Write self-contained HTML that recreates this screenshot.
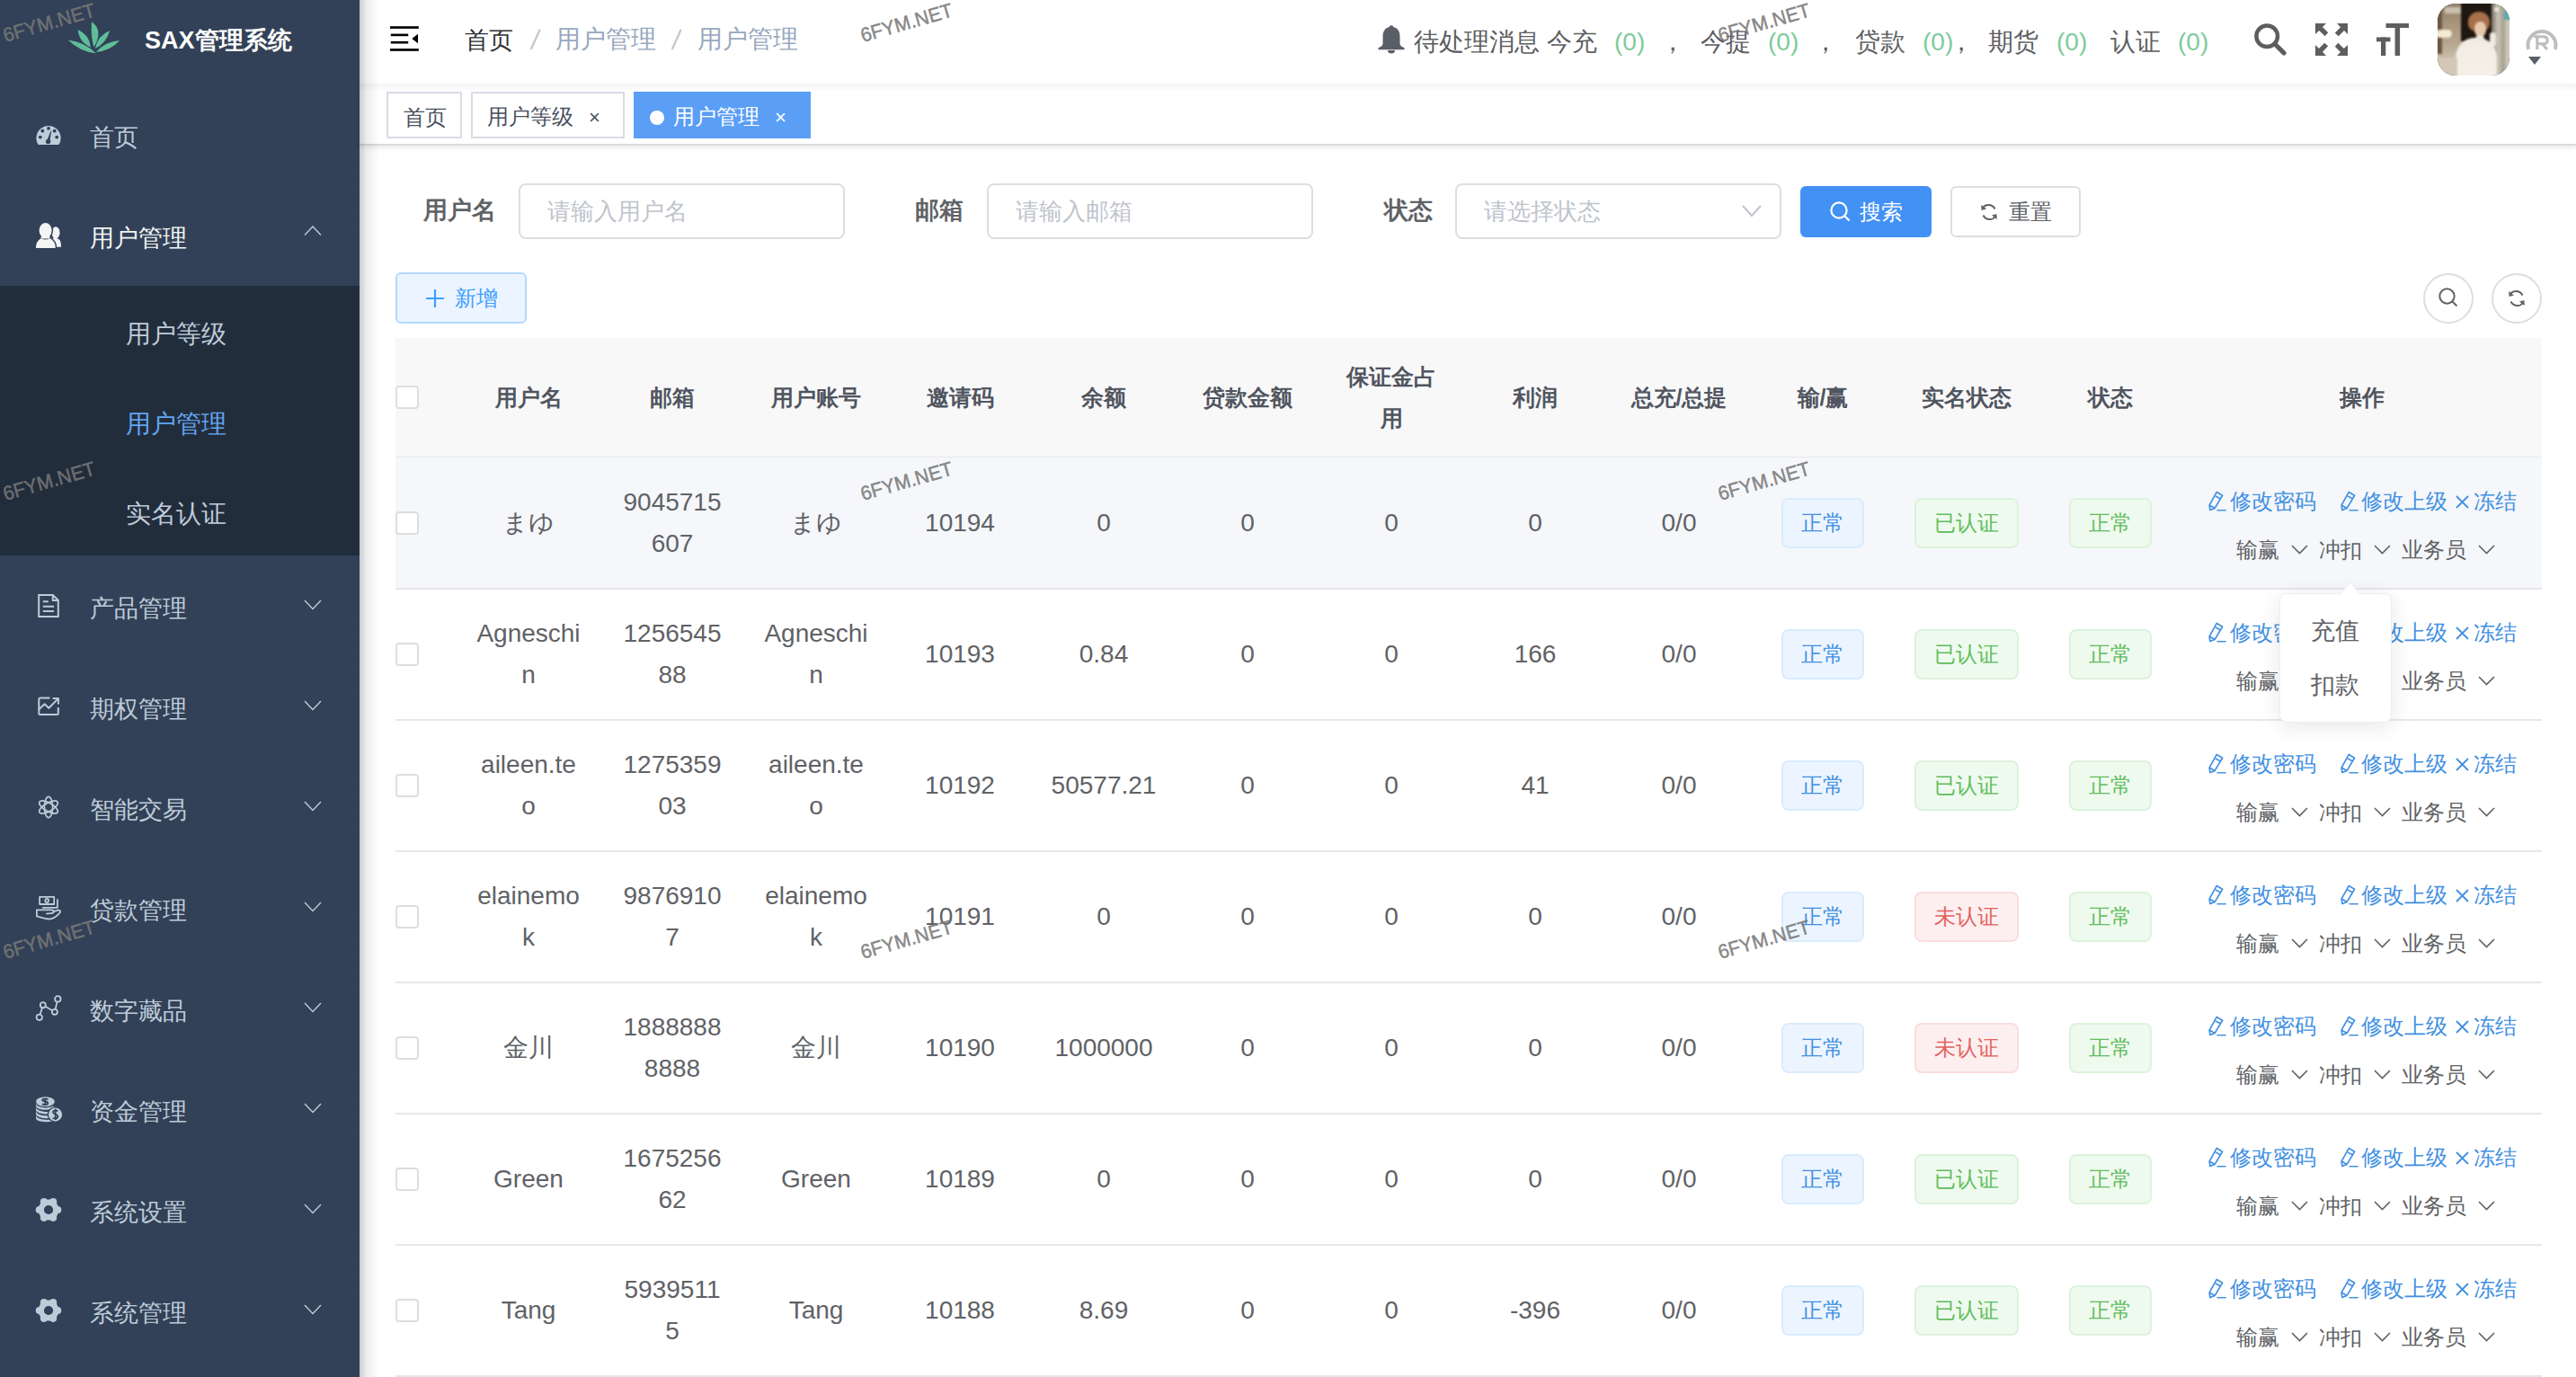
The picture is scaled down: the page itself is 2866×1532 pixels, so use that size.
<!DOCTYPE html>
<html><head><meta charset="utf-8">
<style>
*{box-sizing:border-box;margin:0;padding:0}
html,body{width:2866px;height:1532px;overflow:hidden;background:#fff;font-family:"Liberation Sans",sans-serif;position:relative}
.a{position:absolute;white-space:nowrap}
svg.a{overflow:visible}
.wm{position:absolute;font-size:22px;color:rgba(120,120,120,.87);transform-origin:0 18.3px;transform:rotate(-16deg) scaleX(.97);white-space:nowrap;line-height:22px;height:22px;font-weight:normal;-webkit-text-stroke:.5px rgba(120,120,120,.87)}
.tag{position:absolute;height:56px;line-height:52px;font-size:24px;border:2px solid;border-radius:8px;text-align:center}
.tb{color:#4290e2;background:#ecf5ff;border-color:#d9ecff}
.tg{color:#5fbd5f;background:#effaee;border-color:#dcf2dc}
.tr{color:#e2625f;background:#fdeff0;border-color:#fbdcdd}
.cb{position:absolute;width:26px;height:26px;border:2px solid #dddee2;border-radius:4px;background:#fff}
</style></head><body>

<div class="a" style="left:0;top:0;width:400px;height:1532px;background:#324157"></div>
<svg class="a" style="left:70px;top:18px" width="70" height="48" viewBox="70 18 70 48">
<g fill="#5fbd9a">
<path d="M104.5 52.5 Q115.5 33.8 102 24.3 Q100.7 39.8 104.5 52.5Z"/>
<path d="M100.9 52.4 Q99.4 38.4 86.6 32.9 Q87.9 46.9 100.9 52.4Z"/>
<path d="M105.8 54 Q117.9 48.4 122.2 33.9 Q108.6 39.5 105.8 54Z"/>
<path d="M106.8 59.2 Q93.7 46.3 75.8 44.4 Q88.9 57.5 106.8 59.2Z"/>
<path d="M106.9 57.9 Q122.8 56.9 133.2 45.1 Q117.4 46.2 106.9 57.9Z"/>
</g></svg>
<div class="a" style="left:161px;top:24.0px;height:43px;line-height:43px;font-size:27px;color:#ffffff;font-weight:bold;">SAX管理系统</div>
<svg class="a" style="left:40px;top:136px" width="28" height="28" viewBox="0 0 28 28">
<path fill="#bfcbd9" d="M2.6 25 A 13.6 13.6 0 1 1 25.4 25 Z"/>
<g fill="#324157"><circle cx="14" cy="6.8" r="1.9"/><circle cx="7.3" cy="9.7" r="1.9"/><circle cx="20.7" cy="9.7" r="1.9"/><circle cx="4.8" cy="16.6" r="1.9"/><circle cx="23.2" cy="16.6" r="1.9"/>
<circle cx="13.6" cy="21.4" r="2.7"/><path d="M12.2 20.8 L16.5 9.5 L17.2 9.8 L15.2 21.8Z"/></g></svg>
<div class="a" style="left:100px;top:132.0px;height:43px;line-height:43px;font-size:27px;color:#bfcbd9;font-weight:normal;">首页</div>
<svg class="a" style="left:40px;top:248px" width="28" height="28" viewBox="0 0 28 28">
<g fill="#f4f4f5"><ellipse cx="22" cy="10.8" rx="4.6" ry="6.6"/><path d="M17 17.5 Q23 15.5 26.5 19 Q28.2 21.5 28 26.8 L20 26.8 Z"/></g>
<g fill="#324157" stroke="#324157" stroke-width="3"><ellipse cx="10.6" cy="8.4" rx="7" ry="8.3"/>
<path d="M0 28 Q-0.2 20.5 5.5 17.2 Q10.6 19.6 15.7 17.2 Q21.9 20.5 21.7 28 Z"/></g>
<g fill="#f4f4f5"><ellipse cx="10.6" cy="8.4" rx="7" ry="8.3"/>
<path d="M0 28 Q-0.2 20.5 5.5 17.2 Q10.6 19.6 15.7 17.2 Q21.9 20.5 21.7 28 Z"/><path d="M6 14 L15.2 14 L15.7 17.4 L5.5 17.4Z"/></g></svg>
<div class="a" style="left:100px;top:244.0px;height:43px;line-height:43px;font-size:27px;color:#f4f4f5;font-weight:normal;">用户管理</div>
<svg class="a" style="left:339px;top:252.2px" width="18" height="9.5" viewBox="0 0 18 9.5"><path d="M0 9.5 L9.0 0 L18 9.5" fill="none" stroke="#bfcbd9" stroke-width="1.4"/></svg>
<div class="a" style="left:0;top:318px;width:400px;height:300px;background:#222d3c"></div>
<div class="a" style="left:140px;top:349.5px;height:44px;line-height:44px;font-size:28px;color:#bfcbd9;font-weight:normal;">用户等级</div>
<div class="a" style="left:140px;top:449.5px;height:44px;line-height:44px;font-size:28px;color:#62a5f2;font-weight:normal;">用户管理</div>
<div class="a" style="left:140px;top:549.5px;height:44px;line-height:44px;font-size:28px;color:#bfcbd9;font-weight:normal;">实名认证</div>
<svg class="a" style="left:40px;top:660px" width="28" height="28" viewBox="0 0 28 28">
<g fill="none" stroke="#bfcbd9" stroke-width="2"><path d="M3.2 1.9 L18.8 1.9 L24.8 8 L24.8 25.9 L3.2 25.9 Z"/><path d="M18.8 1.9 L18.8 8 L24.8 8"/>
<path d="M7.8 9.2 H13.8 M7.8 14.7 H20 M7.8 20 H20"/></g></svg>
<div class="a" style="left:100px;top:656.0px;height:43px;line-height:43px;font-size:27px;color:#bfcbd9;font-weight:normal;">产品管理</div>
<svg class="a" style="left:339px;top:667.8px" width="18" height="9.5" viewBox="0 0 18 9.5"><path d="M0 0 L9.0 9.5 L18 0" fill="none" stroke="#bfcbd9" stroke-width="1.4"/></svg>
<svg class="a" style="left:40px;top:772px" width="28" height="28" viewBox="0 0 28 28">
<g fill="none" stroke="#bfcbd9" stroke-width="2" stroke-linejoin="round"><path d="M15.4 4.6 L4.8 4.6 Q3.3 4.6 3.3 6.1 L3.3 21.6 Q3.3 23.1 4.8 23.1 L23.3 23.1 Q24.8 23.1 24.8 21.6 L24.8 15"/>
<path d="M3.6 16.9 L9.6 11.2 L14.3 15.8 L24.6 5.4"/><path d="M18.7 4.9 L24.9 4.9 L24.9 11.4"/></g></svg>
<div class="a" style="left:100px;top:768.0px;height:43px;line-height:43px;font-size:27px;color:#bfcbd9;font-weight:normal;">期权管理</div>
<svg class="a" style="left:339px;top:779.8px" width="18" height="9.5" viewBox="0 0 18 9.5"><path d="M0 0 L9.0 9.5 L18 0" fill="none" stroke="#bfcbd9" stroke-width="1.4"/></svg>
<svg class="a" style="left:40px;top:884px" width="28" height="28" viewBox="0 0 28 28">
<g fill="none" stroke="#bfcbd9" stroke-width="1.7"><ellipse cx="14" cy="14" rx="4.6" ry="11.6"/><ellipse cx="14" cy="14" rx="4.6" ry="11.6" transform="rotate(60 14 14)"/><ellipse cx="14" cy="14" rx="4.6" ry="11.6" transform="rotate(-60 14 14)"/></g></svg>
<div class="a" style="left:100px;top:880.0px;height:43px;line-height:43px;font-size:27px;color:#bfcbd9;font-weight:normal;">智能交易</div>
<svg class="a" style="left:339px;top:891.8px" width="18" height="9.5" viewBox="0 0 18 9.5"><path d="M0 0 L9.0 9.5 L18 0" fill="none" stroke="#bfcbd9" stroke-width="1.4"/></svg>
<svg class="a" style="left:40px;top:996px" width="28" height="28" viewBox="0 0 28 28">
<g fill="none" stroke="#bfcbd9" stroke-width="1.8" stroke-linejoin="round"><rect x="4.1" y="1.8" width="16.1" height="8.2"/><circle cx="12.15" cy="5.9" r="1.9"/><path d="M7.1 13.8 L23.9 13.8 L23.9 4.2"/>
<path d="M0.9 16.3 H17.3 Q19.8 16.3 19.8 18.2 L24.5 16.7 Q26.8 16.3 27.1 17.9 Q27.2 19.2 25.8 20.3 Q21 25.5 16.5 26.4 Q12 27 0.9 23.4 Z"/><path d="M19.8 18.2 Q19.6 20.1 17.3 20.2 L11.2 20.6"/></g></svg>
<div class="a" style="left:100px;top:992.0px;height:43px;line-height:43px;font-size:27px;color:#bfcbd9;font-weight:normal;">贷款管理</div>
<svg class="a" style="left:339px;top:1003.8px" width="18" height="9.5" viewBox="0 0 18 9.5"><path d="M0 0 L9.0 9.5 L18 0" fill="none" stroke="#bfcbd9" stroke-width="1.4"/></svg>
<svg class="a" style="left:40px;top:1108px" width="28" height="28" viewBox="0 0 28 28">
<g fill="none" stroke="#bfcbd9" stroke-width="1.8"><circle cx="3.8" cy="23.8" r="3.2"/><circle cx="7.8" cy="10.2" r="3"/><circle cx="20.9" cy="17.8" r="3"/><circle cx="24.3" cy="3.4" r="3.2"/>
<path d="M4.6 20.6 L7 13.2 M10.5 11.7 L18.2 16.2 M21.6 14.8 L23.6 6.6"/></g></svg>
<div class="a" style="left:100px;top:1104.0px;height:43px;line-height:43px;font-size:27px;color:#bfcbd9;font-weight:normal;">数字藏品</div>
<svg class="a" style="left:339px;top:1115.8px" width="18" height="9.5" viewBox="0 0 18 9.5"><path d="M0 0 L9.0 9.5 L18 0" fill="none" stroke="#bfcbd9" stroke-width="1.4"/></svg>
<svg class="a" style="left:40px;top:1220px" width="28" height="28" viewBox="0 0 28 28">
<g fill="#bfcbd9"><ellipse cx="10.4" cy="5.6" rx="10.4" ry="5.4"/>
<path d="M0 7.5 Q0 11.5 10.4 12.5 Q16 12.2 20 10.5 L20 12.5 Q15 15 10.4 14.8 Q2 14.5 0 11Z M0 12 Q1 16 10.4 17 Q13 17 15.2 16.4 L15.5 19 Q13 19.5 10.4 19.5 Q2 19 0 15.5Z M0 16.5 Q1 20.5 10.4 21.3 L15.8 21.2 L16.5 23.8 Q13 24.3 10.4 24.2 Q2 23.6 0 20Z M0 21 Q1 25 10.4 25.8 Q14 25.8 17.5 25.5 L19 27.6 Q14 28.5 10.4 28.2 Q1 27.6 0 24.5Z"/>
<circle cx="21.5" cy="20" r="8.2" stroke="#324157" stroke-width="1.2"/></g>
<g fill="none" stroke="#324157" stroke-width="1.8"><path d="M13.5 3.2 Q10 1.5 7.5 3 Q6 4.6 10.3 5.5 Q14.3 6.3 13 8.2 Q10.5 9.8 6.8 8.3 M10.3 1.5 V9.8"/>
<path d="M24.3 16.2 Q21.5 14.5 19.5 16 Q18 18.2 21.7 19.6 Q25.3 21 24 23.5 Q21.8 25.5 18.8 23.8 M21.7 13.8 V26"/></g></svg>
<div class="a" style="left:100px;top:1216.0px;height:43px;line-height:43px;font-size:27px;color:#bfcbd9;font-weight:normal;">资金管理</div>
<svg class="a" style="left:339px;top:1227.8px" width="18" height="9.5" viewBox="0 0 18 9.5"><path d="M0 0 L9.0 9.5 L18 0" fill="none" stroke="#bfcbd9" stroke-width="1.4"/></svg>
<svg class="a" style="left:40px;top:1332px" width="28" height="28" viewBox="0 0 28 28">
<g fill="#bfcbd9"><circle cx="14" cy="14" r="11.4"/><circle cx="24.20" cy="14.00" r="4.1"/><circle cx="19.10" cy="22.83" r="4.1"/><circle cx="8.90" cy="22.83" r="4.1"/><circle cx="3.80" cy="14.00" r="4.1"/><circle cx="8.90" cy="5.17" r="4.1"/><circle cx="19.10" cy="5.17" r="4.1"/></g><circle cx="14" cy="14" r="5.1" fill="#324157"/></svg>
<div class="a" style="left:100px;top:1328.0px;height:43px;line-height:43px;font-size:27px;color:#bfcbd9;font-weight:normal;">系统设置</div>
<svg class="a" style="left:339px;top:1339.8px" width="18" height="9.5" viewBox="0 0 18 9.5"><path d="M0 0 L9.0 9.5 L18 0" fill="none" stroke="#bfcbd9" stroke-width="1.4"/></svg>
<svg class="a" style="left:40px;top:1444px" width="28" height="28" viewBox="0 0 28 28">
<g fill="#bfcbd9"><circle cx="14" cy="14" r="11.4"/><circle cx="24.20" cy="14.00" r="4.1"/><circle cx="19.10" cy="22.83" r="4.1"/><circle cx="8.90" cy="22.83" r="4.1"/><circle cx="3.80" cy="14.00" r="4.1"/><circle cx="8.90" cy="5.17" r="4.1"/><circle cx="19.10" cy="5.17" r="4.1"/></g><circle cx="14" cy="14" r="5.1" fill="#324157"/></svg>
<div class="a" style="left:100px;top:1440.0px;height:43px;line-height:43px;font-size:27px;color:#bfcbd9;font-weight:normal;">系统管理</div>
<svg class="a" style="left:339px;top:1451.8px" width="18" height="9.5" viewBox="0 0 18 9.5"><path d="M0 0 L9.0 9.5 L18 0" fill="none" stroke="#bfcbd9" stroke-width="1.4"/></svg>
<div class="a" style="left:400px;top:0;width:2466px;height:94px;background:#fff;box-shadow:0 1px 4px rgba(0,21,41,.08)"></div>
<svg class="a" style="left:434px;top:29px" width="32" height="28" viewBox="0 0 32 28"><g fill="#000">
<rect x="0" y="0.2" width="31.8" height="2.7"/><rect x="0.8" y="8.6" width="19.4" height="2.6"/><rect x="0.8" y="16.9" width="19.4" height="2.6"/><rect x="0" y="25.1" width="31.8" height="2.7"/>
<path d="M31 8.8 L24.3 14 L31 19.2Z"/></g></svg>
<div class="a" style="left:517px;top:23.5px;height:43px;line-height:43px;font-size:27px;color:#303133;font-weight:normal;">首页</div>
<svg class="a" style="left:588px;top:31px" width="16" height="26" viewBox="0 0 16 26"><path d="M3 23.2 L12.4 2.6" stroke="#c6c8cc" stroke-width="2.4" stroke-linecap="round"/></svg>
<div class="a" style="left:618px;top:22.0px;height:44px;line-height:44px;font-size:28px;color:#97a8be;font-weight:normal;">用户管理</div>
<svg class="a" style="left:745px;top:31px" width="16" height="26" viewBox="0 0 16 26"><path d="M3 23.2 L12.4 2.6" stroke="#c6c8cc" stroke-width="2.4" stroke-linecap="round"/></svg>
<div class="a" style="left:776px;top:22.0px;height:44px;line-height:44px;font-size:28px;color:#97a8be;font-weight:normal;">用户管理</div>
<svg class="a" style="left:1533px;top:28px" width="30" height="32" viewBox="0 0 30 32"><g fill="#5a5e66">
<circle cx="15" cy="2.6" r="2.4"/><path d="M15 2 C 8 2 5.5 7 5.5 12.5 L5.5 20.5 Q5.5 23 2 24.5 L0.5 25.3 L0.5 27.2 L29.5 27.2 L29.5 25.3 L28 24.5 Q24.5 23 24.5 20.5 L24.5 12.5 C 24.5 7 22 2 15 2Z"/>
<path d="M10.8 28 Q11.5 31.6 15 31.6 Q18.5 31.6 19.2 28Z"/></g></svg>
<div class="a" style="left:1573px;top:25.0px;height:44px;line-height:44px;font-size:28px;color:#5c5e62;font-weight:normal;">待处理消息</div>
<div class="a" style="left:1721px;top:25.0px;height:44px;line-height:44px;font-size:28px;color:#5c5e62;font-weight:normal;">今充</div>
<div class="a" style="left:1796px;top:25.0px;height:44px;line-height:44px;font-size:28px;color:#7fcb9c;font-weight:normal;">(0)</div>
<div class="a" style="left:1847px;top:25.0px;height:44px;line-height:44px;font-size:28px;color:#5c5e62;font-weight:normal;">，</div>
<div class="a" style="left:1892px;top:25.0px;height:44px;line-height:44px;font-size:28px;color:#5c5e62;font-weight:normal;">今提</div>
<div class="a" style="left:1967px;top:25.0px;height:44px;line-height:44px;font-size:28px;color:#7fcb9c;font-weight:normal;">(0)</div>
<div class="a" style="left:2017px;top:25.0px;height:44px;line-height:44px;font-size:28px;color:#5c5e62;font-weight:normal;">，</div>
<div class="a" style="left:2064px;top:25.0px;height:44px;line-height:44px;font-size:28px;color:#5c5e62;font-weight:normal;">贷款</div>
<div class="a" style="left:2139px;top:25.0px;height:44px;line-height:44px;font-size:28px;color:#7fcb9c;font-weight:normal;">(0)</div>
<div class="a" style="left:2168px;top:25.0px;height:44px;line-height:44px;font-size:28px;color:#5c5e62;font-weight:normal;">，</div>
<div class="a" style="left:2212px;top:25.0px;height:44px;line-height:44px;font-size:28px;color:#5c5e62;font-weight:normal;">期货</div>
<div class="a" style="left:2288px;top:25.0px;height:44px;line-height:44px;font-size:28px;color:#7fcb9c;font-weight:normal;">(0)</div>
<div class="a" style="left:2348px;top:25.0px;height:44px;line-height:44px;font-size:28px;color:#5c5e62;font-weight:normal;">认证</div>
<div class="a" style="left:2423px;top:25.0px;height:44px;line-height:44px;font-size:28px;color:#7fcb9c;font-weight:normal;">(0)</div>
<svg class="a" style="left:2508px;top:26px" width="36" height="36" viewBox="0 0 36 36"><g fill="none" stroke="#5d5e60">
<circle cx="14.2" cy="14.2" r="11.8" stroke-width="4.5"/><path d="M23 23 L33 33" stroke-width="5.2" stroke-linecap="round"/></g></svg>
<svg class="a" style="left:2576px;top:26px" width="36" height="36" viewBox="0 0 36 36"><g fill="#5d5e60">
<path d="M0 0 H12 L8 4 L14.2 10.2 L10.7 14.2 L4.2 8 L0 12Z"/>
<path d="M36 0 V12 L32 8 L25.8 14.2 L21.8 10.7 L28 4.2 L24 0Z"/>
<path d="M0 36 V24 L4 28 L10.2 21.8 L14.2 25.3 L8 31.8 L12 36Z"/>
<path d="M36 36 H24 L28 32 L21.8 25.8 L25.3 21.8 L31.8 28 L36 24Z"/></g></svg>
<svg class="a" style="left:2644px;top:26px" width="36" height="36" viewBox="0 0 36 36"><g fill="#5d5e60">
<rect x="10.5" y="0" width="25.5" height="5"/><rect x="20.6" y="0" width="5.5" height="36"/>
<rect x="0" y="15.5" width="15.5" height="4.8"/><rect x="5" y="15.5" width="5.3" height="20.5"/></g></svg>
<div class="a" style="left:2712px;top:4px;width:80px;height:80px;border-radius:20px;overflow:hidden;background:#2a2018">
<div class="a" style="left:-4px;top:-4px;width:88px;height:88px;filter:blur(1.2px)">
<div class="a" style="left:0;top:0;width:34px;height:88px;background:linear-gradient(to bottom,#8f7c66 0%,#a8957c 30%,#b7a78f 55%,#cbbfad 75%,#d6ccbd 100%)"></div>
<div class="a" style="left:12px;top:8px;width:20px;height:7px;background:#cbbfae"></div>
<div class="a" style="left:0;top:0;width:9px;height:60px;background:#6e5646"></div>
<div class="a" style="left:2px;top:33px;width:18px;height:9px;border-radius:5px;background:#f3e9d2"></div>
<div class="a" style="left:30px;top:0;width:36px;height:46px;background:#1e1712"></div>
<div class="a" style="left:64px;top:0;width:24px;height:88px;background:linear-gradient(to right,#7d7668,#c9c5b8 30%,#a59f90 55%,#d2cec4 75%,#b5b0a3)"></div>
<div class="a" style="left:78px;top:12px;width:10px;height:10px;background:#5aa9b0"></div>
<div class="a" style="left:67px;top:8px;width:5px;height:5px;border-radius:50%;background:#f2ede0"></div>
<div class="a" style="left:38px;top:13px;width:24px;height:22px;border-radius:50% 50% 40% 40%;background:#a8704a"></div>
<div class="a" style="left:45px;top:24px;width:13px;height:17px;border-radius:45%;background:#e6c9ae"></div>
<div class="a" style="left:62px;top:36px;width:7px;height:16px;border-radius:3px;background:#ece8e0"></div>
<div class="a" style="left:24px;top:42px;width:46px;height:50px;border-radius:45% 45% 0 0;background:linear-gradient(to bottom,#f1ede3,#f5f1e8)"></div>
<div class="a" style="left:46px;top:39px;width:10px;height:8px;border-radius:50%;background:#efe9e0"></div>
<div class="a" style="left:0;top:64px;width:26px;height:24px;background:#d3c7b6"></div>
</div></div>
<svg class="a" style="left:2810px;top:32px" width="36" height="24" viewBox="0 0 36 24"><g fill="none" stroke="#bcbdbf" stroke-width="3.9">
<path d="M3.15 22.9 A 15.5 15.5 0 1 1 32.85 22.9"/></g><path d="M12.85 22.9 V8.8 H19.5 Q24.2 8.8 24.2 12.9 Q24.2 16.8 19.5 16.8 H12.85 M18.5 16.5 L23.8 22.9 M9.2 8.8 H13" fill="none" stroke="#bcbdbf" stroke-width="3.1"/></svg>
<svg class="a" style="left:2813px;top:63px" width="14" height="9" viewBox="0 0 14 9"><path d="M0 0 H14 L7 9Z" fill="#5a5e66"/></svg>
<div class="a" style="left:400px;top:94px;width:2466px;height:68px;background:#fff;border-bottom:2px solid #d9dbe0;box-shadow:0 2px 6px 0 rgba(0,0,0,.10)"></div>
<div class="a" style="left:400px;top:94px;width:2466px;height:6px;background:linear-gradient(to bottom,rgba(0,0,0,.045),rgba(0,0,0,.01))"></div>
<div class="a" style="left:430px;top:102px;width:84px;height:52px;border:2px solid #d8dce5;background:#fff"></div>
<div class="a" style="left:448.5px;top:111.5px;height:38px;line-height:38px;font-size:24px;color:#495060;font-weight:normal;">首页</div>
<div class="a" style="left:524px;top:102px;width:171px;height:52px;border:2px solid #d8dce5;background:#fff"></div>
<div class="a" style="left:542px;top:111.0px;height:38px;line-height:38px;font-size:24px;color:#495060;font-weight:normal;">用户等级</div>
<div class="a" style="left:655px;top:112.5px;height:35px;line-height:35px;font-size:22px;color:#495060;font-weight:normal;">×</div>
<div class="a" style="left:705px;top:102px;width:197px;height:52px;background:#5a9ef5"></div>
<div class="a" style="left:723px;top:123px;width:16px;height:16px;border-radius:50%;background:#fff"></div>
<div class="a" style="left:749px;top:111.0px;height:38px;line-height:38px;font-size:24px;color:#fff;font-weight:normal;">用户管理</div>
<div class="a" style="left:862px;top:112.5px;height:35px;line-height:35px;font-size:22px;color:#fff;font-weight:normal;">×</div>
<div class="a" style="left:400px;top:0;width:22px;height:1532px;background:linear-gradient(to right,rgba(0,21,41,.22),rgba(0,21,41,.08) 35%,rgba(0,21,41,0))"></div>
<div class="a" style="left:471px;top:213.0px;height:43px;line-height:43px;font-size:27px;color:#606266;font-weight:bold;">用户名</div>
<div class="a" style="left:577px;top:204px;width:363px;height:62px;border:2px solid #dddee2;border-radius:8px;background:#fff"></div>
<div class="a" style="left:609px;top:214.5px;height:41px;line-height:41px;font-size:26px;color:#c0c4cc;font-weight:normal;">请输入用户名</div>
<div class="a" style="left:1018px;top:213.0px;height:43px;line-height:43px;font-size:27px;color:#606266;font-weight:bold;">邮箱</div>
<div class="a" style="left:1098px;top:204px;width:363px;height:62px;border:2px solid #dddee2;border-radius:8px;background:#fff"></div>
<div class="a" style="left:1130px;top:214.5px;height:41px;line-height:41px;font-size:26px;color:#c0c4cc;font-weight:normal;">请输入邮箱</div>
<div class="a" style="left:1540px;top:213.0px;height:43px;line-height:43px;font-size:27px;color:#606266;font-weight:bold;">状态</div>
<div class="a" style="left:1619px;top:204px;width:363px;height:62px;border:2px solid #dddee2;border-radius:8px;background:#fff"></div>
<div class="a" style="left:1651px;top:214.5px;height:41px;line-height:41px;font-size:26px;color:#c0c4cc;font-weight:normal;">请选择状态</div>
<svg class="a" style="left:1939px;top:228.5px" width="20" height="11" viewBox="0 0 20 11"><path d="M0 0 L10.0 11 L20 0" fill="none" stroke="#c0c4cc" stroke-width="2"/></svg>
<div class="a" style="left:2003px;top:207px;width:146px;height:57px;border-radius:6px;background:#4291f5"></div>
<svg class="a" style="left:2036px;top:224px" width="23" height="23" viewBox="0 0 23 23"><g fill="none" stroke="#fff" stroke-width="2.2"><circle cx="10" cy="10" r="8.6"/><path d="M16.5 16.5 L21.5 21.5"/></g></svg>
<div class="a" style="left:2069px;top:217.0px;height:38px;line-height:38px;font-size:24px;color:#fff;font-weight:normal;">搜索</div>
<div class="a" style="left:2170px;top:207px;width:145px;height:57px;border-radius:6px;background:#fff;border:2px solid #dddee2"></div>
<svg class="a" style="left:2203px;top:226px" width="20" height="20" viewBox="0 0 20 20"><g fill="none" stroke="#606266" stroke-width="2"><path d="M16.5 6.5 A8 8 0 0 0 3 5"/><path d="M3.5 13.5 A8 8 0 0 0 17 15"/></g><g fill="#606266"><path d="M1.2 2 L1.6 8 L7 6.5Z"/><path d="M18.8 18 L18.4 12 L13 13.5Z"/></g></svg>
<div class="a" style="left:2235px;top:217.0px;height:38px;line-height:38px;font-size:24px;color:#606266;font-weight:normal;">重置</div>
<div class="a" style="left:440px;top:303px;width:146px;height:57px;border-radius:6px;background:#ecf5ff;border:2px solid #b3d8ff"></div>
<svg class="a" style="left:474px;top:322px" width="20" height="20" viewBox="0 0 20 20"><path d="M10 0 V20 M0 10 H20" stroke="#409eff" stroke-width="2.2"/></svg>
<div class="a" style="left:506px;top:313.0px;height:38px;line-height:38px;font-size:24px;color:#409eff;font-weight:normal;">新增</div>
<div class="a" style="left:2696px;top:304px;width:56px;height:56px;border-radius:50%;border:2px solid #dddee2;background:#fff"></div>
<svg class="a" style="left:2713px;top:320px" width="22" height="22" viewBox="0 0 22 22"><g fill="none" stroke="#606266" stroke-width="2"><circle cx="9.5" cy="9.5" r="8.2"/><path d="M15.5 15.5 L20.5 20.5"/></g></svg>
<div class="a" style="left:2772px;top:304px;width:56px;height:56px;border-radius:50%;border:2px solid #dddee2;background:#fff"></div>
<svg class="a" style="left:2790px;top:322px" width="20" height="20" viewBox="0 0 20 20"><g fill="none" stroke="#606266" stroke-width="2"><path d="M16.5 6.5 A8 8 0 0 0 3 5"/><path d="M3.5 13.5 A8 8 0 0 0 17 15"/></g><g fill="#606266"><path d="M1.2 2 L1.6 8 L7 6.5Z"/><path d="M18.8 18 L18.4 12 L13 13.5Z"/></g></svg>
<div class="a" style="left:440px;top:376px;width:2388px;height:134px;background:#f8f8f9;border-bottom:2px solid #e6e7ea"></div>
<div class="a" style="left:440px;top:509px;width:2388px;height:146px;background:#f5f7fa"></div>
<div class="a" style="left:440px;top:654px;width:2388px;height:2px;background:#e6e7ea"></div>
<div class="a" style="left:440px;top:800px;width:2388px;height:2px;background:#e6e7ea"></div>
<div class="a" style="left:440px;top:946px;width:2388px;height:2px;background:#e6e7ea"></div>
<div class="a" style="left:440px;top:1092px;width:2388px;height:2px;background:#e6e7ea"></div>
<div class="a" style="left:440px;top:1238px;width:2388px;height:2px;background:#e6e7ea"></div>
<div class="a" style="left:440px;top:1384px;width:2388px;height:2px;background:#e6e7ea"></div>
<div class="a" style="left:440px;top:1530px;width:2388px;height:2px;background:#e6e7ea"></div>
<div class="cb" style="left:440px;top:429px"></div>
<div class="a" style="left:438.0px;width:300px;text-align:center;top:422.0px;height:40px;line-height:40px;font-size:25px;color:#50555f;font-weight:bold;">用户名</div>
<div class="a" style="left:598.0px;width:300px;text-align:center;top:422.0px;height:40px;line-height:40px;font-size:25px;color:#50555f;font-weight:bold;">邮箱</div>
<div class="a" style="left:758.0px;width:300px;text-align:center;top:422.0px;height:40px;line-height:40px;font-size:25px;color:#50555f;font-weight:bold;">用户账号</div>
<div class="a" style="left:918.0px;width:300px;text-align:center;top:422.0px;height:40px;line-height:40px;font-size:25px;color:#50555f;font-weight:bold;">邀请码</div>
<div class="a" style="left:1078.0px;width:300px;text-align:center;top:422.0px;height:40px;line-height:40px;font-size:25px;color:#50555f;font-weight:bold;">余额</div>
<div class="a" style="left:1238.0px;width:300px;text-align:center;top:422.0px;height:40px;line-height:40px;font-size:25px;color:#50555f;font-weight:bold;">贷款金额</div>
<div class="a" style="left:1398.0px;width:300px;text-align:center;top:399.0px;height:40px;line-height:40px;font-size:25px;color:#50555f;font-weight:bold;">保证金占</div>
<div class="a" style="left:1398.0px;width:300px;text-align:center;top:445.0px;height:40px;line-height:40px;font-size:25px;color:#50555f;font-weight:bold;">用</div>
<div class="a" style="left:1558.0px;width:300px;text-align:center;top:422.0px;height:40px;line-height:40px;font-size:25px;color:#50555f;font-weight:bold;">利润</div>
<div class="a" style="left:1718.0px;width:300px;text-align:center;top:422.0px;height:40px;line-height:40px;font-size:25px;color:#50555f;font-weight:bold;">总充/总提</div>
<div class="a" style="left:1878.0px;width:300px;text-align:center;top:422.0px;height:40px;line-height:40px;font-size:25px;color:#50555f;font-weight:bold;">输/赢</div>
<div class="a" style="left:2038.0px;width:300px;text-align:center;top:422.0px;height:40px;line-height:40px;font-size:25px;color:#50555f;font-weight:bold;">实名状态</div>
<div class="a" style="left:2198.0px;width:300px;text-align:center;top:422.0px;height:40px;line-height:40px;font-size:25px;color:#50555f;font-weight:bold;">状态</div>
<div class="a" style="left:2478.0px;width:300px;text-align:center;top:422.0px;height:40px;line-height:40px;font-size:25px;color:#50555f;font-weight:bold;">操作</div>
<div class="cb" style="left:440px;top:569px"></div>
<div class="a" style="left:508.0px;width:160px;text-align:center;top:559.0px;height:46px;line-height:46px;font-size:28px;color:#606266;font-weight:normal;">まゆ</div>
<div class="a" style="left:668.0px;width:160px;text-align:center;top:536.0px;height:46px;line-height:46px;font-size:28px;color:#606266;font-weight:normal;">9045715</div>
<div class="a" style="left:668.0px;width:160px;text-align:center;top:582.0px;height:46px;line-height:46px;font-size:28px;color:#606266;font-weight:normal;">607</div>
<div class="a" style="left:828.0px;width:160px;text-align:center;top:559.0px;height:46px;line-height:46px;font-size:28px;color:#606266;font-weight:normal;">まゆ</div>
<div class="a" style="left:988.0px;width:160px;text-align:center;top:559.0px;height:46px;line-height:46px;font-size:28px;color:#606266;font-weight:normal;">10194</div>
<div class="a" style="left:1148.0px;width:160px;text-align:center;top:559.0px;height:46px;line-height:46px;font-size:28px;color:#606266;font-weight:normal;">0</div>
<div class="a" style="left:1308.0px;width:160px;text-align:center;top:559.0px;height:46px;line-height:46px;font-size:28px;color:#606266;font-weight:normal;">0</div>
<div class="a" style="left:1468.0px;width:160px;text-align:center;top:559.0px;height:46px;line-height:46px;font-size:28px;color:#606266;font-weight:normal;">0</div>
<div class="a" style="left:1628.0px;width:160px;text-align:center;top:559.0px;height:46px;line-height:46px;font-size:28px;color:#606266;font-weight:normal;">0</div>
<div class="a" style="left:1788.0px;width:160px;text-align:center;top:559.0px;height:46px;line-height:46px;font-size:28px;color:#606266;font-weight:normal;">0/0</div>
<div class="tag tb" style="left:1982px;top:554px;width:92px">正常</div>
<div class="tag tg" style="left:2130px;top:554px;width:116px">已认证</div>
<div class="tag tg" style="left:2302px;top:554px;width:92px">正常</div>
<svg class="a" style="left:2457px;top:546px" width="22" height="24" viewBox="0 0 22 24"><g fill="none" stroke="#4290e2" stroke-width="1.7" stroke-linejoin="round"><path d="M9.3 1.4 L15.6 5.2 L7.2 19.4 L1.9 21.5 L1.1 16.1 Z M8 6 L13.3 8.7 M1.1 16.1 L7.2 19.4"/><path d="M9.5 21.7 H19.7" stroke-width="1.5"/></g></svg>
<svg class="a" style="left:2604px;top:546px" width="22" height="24" viewBox="0 0 22 24"><g fill="none" stroke="#4290e2" stroke-width="1.7" stroke-linejoin="round"><path d="M9.3 1.4 L15.6 5.2 L7.2 19.4 L1.9 21.5 L1.1 16.1 Z M8 6 L13.3 8.7 M1.1 16.1 L7.2 19.4"/><path d="M9.5 21.7 H19.7" stroke-width="1.5"/></g></svg>
<div class="a" style="left:2481px;top:539.0px;height:38px;line-height:38px;font-size:24px;color:#4290e2;font-weight:normal;">修改密码</div>
<div class="a" style="left:2627px;top:539.0px;height:38px;line-height:38px;font-size:24px;color:#4290e2;font-weight:normal;">修改上级</div>
<svg class="a" style="left:2732px;top:551px" width="15" height="15" viewBox="0 0 15 15"><path d="M1 1 L14 14 M14 1 L1 14" stroke="#4290e2" stroke-width="1.8"/></svg>
<div class="a" style="left:2752px;top:539.0px;height:38px;line-height:38px;font-size:24px;color:#4290e2;font-weight:normal;">冻结</div>
<div class="a" style="left:2488px;top:593.0px;height:38px;line-height:38px;font-size:24px;color:#606266;font-weight:normal;">输赢</div>
<svg class="a" style="left:2550px;top:606.8px" width="17" height="8.5" viewBox="0 0 17 8.5"><path d="M0 0 L8.5 8.5 L17 0" fill="none" stroke="#606266" stroke-width="1.6"/></svg>
<div class="a" style="left:2580px;top:593.0px;height:38px;line-height:38px;font-size:24px;color:#606266;font-weight:normal;">冲扣</div>
<svg class="a" style="left:2642px;top:606.8px" width="17" height="8.5" viewBox="0 0 17 8.5"><path d="M0 0 L8.5 8.5 L17 0" fill="none" stroke="#606266" stroke-width="1.6"/></svg>
<div class="a" style="left:2672px;top:593.0px;height:38px;line-height:38px;font-size:24px;color:#606266;font-weight:normal;">业务员</div>
<svg class="a" style="left:2758px;top:606.8px" width="17" height="8.5" viewBox="0 0 17 8.5"><path d="M0 0 L8.5 8.5 L17 0" fill="none" stroke="#606266" stroke-width="1.6"/></svg>
<div class="cb" style="left:440px;top:715px"></div>
<div class="a" style="left:508.0px;width:160px;text-align:center;top:682.0px;height:46px;line-height:46px;font-size:28px;color:#606266;font-weight:normal;">Agneschi</div>
<div class="a" style="left:508.0px;width:160px;text-align:center;top:728.0px;height:46px;line-height:46px;font-size:28px;color:#606266;font-weight:normal;">n</div>
<div class="a" style="left:668.0px;width:160px;text-align:center;top:682.0px;height:46px;line-height:46px;font-size:28px;color:#606266;font-weight:normal;">1256545</div>
<div class="a" style="left:668.0px;width:160px;text-align:center;top:728.0px;height:46px;line-height:46px;font-size:28px;color:#606266;font-weight:normal;">88</div>
<div class="a" style="left:828.0px;width:160px;text-align:center;top:682.0px;height:46px;line-height:46px;font-size:28px;color:#606266;font-weight:normal;">Agneschi</div>
<div class="a" style="left:828.0px;width:160px;text-align:center;top:728.0px;height:46px;line-height:46px;font-size:28px;color:#606266;font-weight:normal;">n</div>
<div class="a" style="left:988.0px;width:160px;text-align:center;top:705.0px;height:46px;line-height:46px;font-size:28px;color:#606266;font-weight:normal;">10193</div>
<div class="a" style="left:1148.0px;width:160px;text-align:center;top:705.0px;height:46px;line-height:46px;font-size:28px;color:#606266;font-weight:normal;">0.84</div>
<div class="a" style="left:1308.0px;width:160px;text-align:center;top:705.0px;height:46px;line-height:46px;font-size:28px;color:#606266;font-weight:normal;">0</div>
<div class="a" style="left:1468.0px;width:160px;text-align:center;top:705.0px;height:46px;line-height:46px;font-size:28px;color:#606266;font-weight:normal;">0</div>
<div class="a" style="left:1628.0px;width:160px;text-align:center;top:705.0px;height:46px;line-height:46px;font-size:28px;color:#606266;font-weight:normal;">166</div>
<div class="a" style="left:1788.0px;width:160px;text-align:center;top:705.0px;height:46px;line-height:46px;font-size:28px;color:#606266;font-weight:normal;">0/0</div>
<div class="tag tb" style="left:1982px;top:700px;width:92px">正常</div>
<div class="tag tg" style="left:2130px;top:700px;width:116px">已认证</div>
<div class="tag tg" style="left:2302px;top:700px;width:92px">正常</div>
<svg class="a" style="left:2457px;top:692px" width="22" height="24" viewBox="0 0 22 24"><g fill="none" stroke="#4290e2" stroke-width="1.7" stroke-linejoin="round"><path d="M9.3 1.4 L15.6 5.2 L7.2 19.4 L1.9 21.5 L1.1 16.1 Z M8 6 L13.3 8.7 M1.1 16.1 L7.2 19.4"/><path d="M9.5 21.7 H19.7" stroke-width="1.5"/></g></svg>
<svg class="a" style="left:2604px;top:692px" width="22" height="24" viewBox="0 0 22 24"><g fill="none" stroke="#4290e2" stroke-width="1.7" stroke-linejoin="round"><path d="M9.3 1.4 L15.6 5.2 L7.2 19.4 L1.9 21.5 L1.1 16.1 Z M8 6 L13.3 8.7 M1.1 16.1 L7.2 19.4"/><path d="M9.5 21.7 H19.7" stroke-width="1.5"/></g></svg>
<div class="a" style="left:2481px;top:685.0px;height:38px;line-height:38px;font-size:24px;color:#4290e2;font-weight:normal;">修改密码</div>
<div class="a" style="left:2627px;top:685.0px;height:38px;line-height:38px;font-size:24px;color:#4290e2;font-weight:normal;">修改上级</div>
<svg class="a" style="left:2732px;top:697px" width="15" height="15" viewBox="0 0 15 15"><path d="M1 1 L14 14 M14 1 L1 14" stroke="#4290e2" stroke-width="1.8"/></svg>
<div class="a" style="left:2752px;top:685.0px;height:38px;line-height:38px;font-size:24px;color:#4290e2;font-weight:normal;">冻结</div>
<div class="a" style="left:2488px;top:739.0px;height:38px;line-height:38px;font-size:24px;color:#606266;font-weight:normal;">输赢</div>
<svg class="a" style="left:2550px;top:752.8px" width="17" height="8.5" viewBox="0 0 17 8.5"><path d="M0 0 L8.5 8.5 L17 0" fill="none" stroke="#606266" stroke-width="1.6"/></svg>
<div class="a" style="left:2580px;top:739.0px;height:38px;line-height:38px;font-size:24px;color:#606266;font-weight:normal;">冲扣</div>
<svg class="a" style="left:2642px;top:752.8px" width="17" height="8.5" viewBox="0 0 17 8.5"><path d="M0 0 L8.5 8.5 L17 0" fill="none" stroke="#606266" stroke-width="1.6"/></svg>
<div class="a" style="left:2672px;top:739.0px;height:38px;line-height:38px;font-size:24px;color:#606266;font-weight:normal;">业务员</div>
<svg class="a" style="left:2758px;top:752.8px" width="17" height="8.5" viewBox="0 0 17 8.5"><path d="M0 0 L8.5 8.5 L17 0" fill="none" stroke="#606266" stroke-width="1.6"/></svg>
<div class="cb" style="left:440px;top:861px"></div>
<div class="a" style="left:508.0px;width:160px;text-align:center;top:828.0px;height:46px;line-height:46px;font-size:28px;color:#606266;font-weight:normal;">aileen.te</div>
<div class="a" style="left:508.0px;width:160px;text-align:center;top:874.0px;height:46px;line-height:46px;font-size:28px;color:#606266;font-weight:normal;">o</div>
<div class="a" style="left:668.0px;width:160px;text-align:center;top:828.0px;height:46px;line-height:46px;font-size:28px;color:#606266;font-weight:normal;">1275359</div>
<div class="a" style="left:668.0px;width:160px;text-align:center;top:874.0px;height:46px;line-height:46px;font-size:28px;color:#606266;font-weight:normal;">03</div>
<div class="a" style="left:828.0px;width:160px;text-align:center;top:828.0px;height:46px;line-height:46px;font-size:28px;color:#606266;font-weight:normal;">aileen.te</div>
<div class="a" style="left:828.0px;width:160px;text-align:center;top:874.0px;height:46px;line-height:46px;font-size:28px;color:#606266;font-weight:normal;">o</div>
<div class="a" style="left:988.0px;width:160px;text-align:center;top:851.0px;height:46px;line-height:46px;font-size:28px;color:#606266;font-weight:normal;">10192</div>
<div class="a" style="left:1148.0px;width:160px;text-align:center;top:851.0px;height:46px;line-height:46px;font-size:28px;color:#606266;font-weight:normal;">50577.21</div>
<div class="a" style="left:1308.0px;width:160px;text-align:center;top:851.0px;height:46px;line-height:46px;font-size:28px;color:#606266;font-weight:normal;">0</div>
<div class="a" style="left:1468.0px;width:160px;text-align:center;top:851.0px;height:46px;line-height:46px;font-size:28px;color:#606266;font-weight:normal;">0</div>
<div class="a" style="left:1628.0px;width:160px;text-align:center;top:851.0px;height:46px;line-height:46px;font-size:28px;color:#606266;font-weight:normal;">41</div>
<div class="a" style="left:1788.0px;width:160px;text-align:center;top:851.0px;height:46px;line-height:46px;font-size:28px;color:#606266;font-weight:normal;">0/0</div>
<div class="tag tb" style="left:1982px;top:846px;width:92px">正常</div>
<div class="tag tg" style="left:2130px;top:846px;width:116px">已认证</div>
<div class="tag tg" style="left:2302px;top:846px;width:92px">正常</div>
<svg class="a" style="left:2457px;top:838px" width="22" height="24" viewBox="0 0 22 24"><g fill="none" stroke="#4290e2" stroke-width="1.7" stroke-linejoin="round"><path d="M9.3 1.4 L15.6 5.2 L7.2 19.4 L1.9 21.5 L1.1 16.1 Z M8 6 L13.3 8.7 M1.1 16.1 L7.2 19.4"/><path d="M9.5 21.7 H19.7" stroke-width="1.5"/></g></svg>
<svg class="a" style="left:2604px;top:838px" width="22" height="24" viewBox="0 0 22 24"><g fill="none" stroke="#4290e2" stroke-width="1.7" stroke-linejoin="round"><path d="M9.3 1.4 L15.6 5.2 L7.2 19.4 L1.9 21.5 L1.1 16.1 Z M8 6 L13.3 8.7 M1.1 16.1 L7.2 19.4"/><path d="M9.5 21.7 H19.7" stroke-width="1.5"/></g></svg>
<div class="a" style="left:2481px;top:831.0px;height:38px;line-height:38px;font-size:24px;color:#4290e2;font-weight:normal;">修改密码</div>
<div class="a" style="left:2627px;top:831.0px;height:38px;line-height:38px;font-size:24px;color:#4290e2;font-weight:normal;">修改上级</div>
<svg class="a" style="left:2732px;top:843px" width="15" height="15" viewBox="0 0 15 15"><path d="M1 1 L14 14 M14 1 L1 14" stroke="#4290e2" stroke-width="1.8"/></svg>
<div class="a" style="left:2752px;top:831.0px;height:38px;line-height:38px;font-size:24px;color:#4290e2;font-weight:normal;">冻结</div>
<div class="a" style="left:2488px;top:885.0px;height:38px;line-height:38px;font-size:24px;color:#606266;font-weight:normal;">输赢</div>
<svg class="a" style="left:2550px;top:898.8px" width="17" height="8.5" viewBox="0 0 17 8.5"><path d="M0 0 L8.5 8.5 L17 0" fill="none" stroke="#606266" stroke-width="1.6"/></svg>
<div class="a" style="left:2580px;top:885.0px;height:38px;line-height:38px;font-size:24px;color:#606266;font-weight:normal;">冲扣</div>
<svg class="a" style="left:2642px;top:898.8px" width="17" height="8.5" viewBox="0 0 17 8.5"><path d="M0 0 L8.5 8.5 L17 0" fill="none" stroke="#606266" stroke-width="1.6"/></svg>
<div class="a" style="left:2672px;top:885.0px;height:38px;line-height:38px;font-size:24px;color:#606266;font-weight:normal;">业务员</div>
<svg class="a" style="left:2758px;top:898.8px" width="17" height="8.5" viewBox="0 0 17 8.5"><path d="M0 0 L8.5 8.5 L17 0" fill="none" stroke="#606266" stroke-width="1.6"/></svg>
<div class="cb" style="left:440px;top:1007px"></div>
<div class="a" style="left:508.0px;width:160px;text-align:center;top:974.0px;height:46px;line-height:46px;font-size:28px;color:#606266;font-weight:normal;">elainemo</div>
<div class="a" style="left:508.0px;width:160px;text-align:center;top:1020.0px;height:46px;line-height:46px;font-size:28px;color:#606266;font-weight:normal;">k</div>
<div class="a" style="left:668.0px;width:160px;text-align:center;top:974.0px;height:46px;line-height:46px;font-size:28px;color:#606266;font-weight:normal;">9876910</div>
<div class="a" style="left:668.0px;width:160px;text-align:center;top:1020.0px;height:46px;line-height:46px;font-size:28px;color:#606266;font-weight:normal;">7</div>
<div class="a" style="left:828.0px;width:160px;text-align:center;top:974.0px;height:46px;line-height:46px;font-size:28px;color:#606266;font-weight:normal;">elainemo</div>
<div class="a" style="left:828.0px;width:160px;text-align:center;top:1020.0px;height:46px;line-height:46px;font-size:28px;color:#606266;font-weight:normal;">k</div>
<div class="a" style="left:988.0px;width:160px;text-align:center;top:997.0px;height:46px;line-height:46px;font-size:28px;color:#606266;font-weight:normal;">10191</div>
<div class="a" style="left:1148.0px;width:160px;text-align:center;top:997.0px;height:46px;line-height:46px;font-size:28px;color:#606266;font-weight:normal;">0</div>
<div class="a" style="left:1308.0px;width:160px;text-align:center;top:997.0px;height:46px;line-height:46px;font-size:28px;color:#606266;font-weight:normal;">0</div>
<div class="a" style="left:1468.0px;width:160px;text-align:center;top:997.0px;height:46px;line-height:46px;font-size:28px;color:#606266;font-weight:normal;">0</div>
<div class="a" style="left:1628.0px;width:160px;text-align:center;top:997.0px;height:46px;line-height:46px;font-size:28px;color:#606266;font-weight:normal;">0</div>
<div class="a" style="left:1788.0px;width:160px;text-align:center;top:997.0px;height:46px;line-height:46px;font-size:28px;color:#606266;font-weight:normal;">0/0</div>
<div class="tag tb" style="left:1982px;top:992px;width:92px">正常</div>
<div class="tag tr" style="left:2130px;top:992px;width:116px">未认证</div>
<div class="tag tg" style="left:2302px;top:992px;width:92px">正常</div>
<svg class="a" style="left:2457px;top:984px" width="22" height="24" viewBox="0 0 22 24"><g fill="none" stroke="#4290e2" stroke-width="1.7" stroke-linejoin="round"><path d="M9.3 1.4 L15.6 5.2 L7.2 19.4 L1.9 21.5 L1.1 16.1 Z M8 6 L13.3 8.7 M1.1 16.1 L7.2 19.4"/><path d="M9.5 21.7 H19.7" stroke-width="1.5"/></g></svg>
<svg class="a" style="left:2604px;top:984px" width="22" height="24" viewBox="0 0 22 24"><g fill="none" stroke="#4290e2" stroke-width="1.7" stroke-linejoin="round"><path d="M9.3 1.4 L15.6 5.2 L7.2 19.4 L1.9 21.5 L1.1 16.1 Z M8 6 L13.3 8.7 M1.1 16.1 L7.2 19.4"/><path d="M9.5 21.7 H19.7" stroke-width="1.5"/></g></svg>
<div class="a" style="left:2481px;top:977.0px;height:38px;line-height:38px;font-size:24px;color:#4290e2;font-weight:normal;">修改密码</div>
<div class="a" style="left:2627px;top:977.0px;height:38px;line-height:38px;font-size:24px;color:#4290e2;font-weight:normal;">修改上级</div>
<svg class="a" style="left:2732px;top:989px" width="15" height="15" viewBox="0 0 15 15"><path d="M1 1 L14 14 M14 1 L1 14" stroke="#4290e2" stroke-width="1.8"/></svg>
<div class="a" style="left:2752px;top:977.0px;height:38px;line-height:38px;font-size:24px;color:#4290e2;font-weight:normal;">冻结</div>
<div class="a" style="left:2488px;top:1031.0px;height:38px;line-height:38px;font-size:24px;color:#606266;font-weight:normal;">输赢</div>
<svg class="a" style="left:2550px;top:1044.8px" width="17" height="8.5" viewBox="0 0 17 8.5"><path d="M0 0 L8.5 8.5 L17 0" fill="none" stroke="#606266" stroke-width="1.6"/></svg>
<div class="a" style="left:2580px;top:1031.0px;height:38px;line-height:38px;font-size:24px;color:#606266;font-weight:normal;">冲扣</div>
<svg class="a" style="left:2642px;top:1044.8px" width="17" height="8.5" viewBox="0 0 17 8.5"><path d="M0 0 L8.5 8.5 L17 0" fill="none" stroke="#606266" stroke-width="1.6"/></svg>
<div class="a" style="left:2672px;top:1031.0px;height:38px;line-height:38px;font-size:24px;color:#606266;font-weight:normal;">业务员</div>
<svg class="a" style="left:2758px;top:1044.8px" width="17" height="8.5" viewBox="0 0 17 8.5"><path d="M0 0 L8.5 8.5 L17 0" fill="none" stroke="#606266" stroke-width="1.6"/></svg>
<div class="cb" style="left:440px;top:1153px"></div>
<div class="a" style="left:508.0px;width:160px;text-align:center;top:1143.0px;height:46px;line-height:46px;font-size:28px;color:#606266;font-weight:normal;">金川</div>
<div class="a" style="left:668.0px;width:160px;text-align:center;top:1120.0px;height:46px;line-height:46px;font-size:28px;color:#606266;font-weight:normal;">1888888</div>
<div class="a" style="left:668.0px;width:160px;text-align:center;top:1166.0px;height:46px;line-height:46px;font-size:28px;color:#606266;font-weight:normal;">8888</div>
<div class="a" style="left:828.0px;width:160px;text-align:center;top:1143.0px;height:46px;line-height:46px;font-size:28px;color:#606266;font-weight:normal;">金川</div>
<div class="a" style="left:988.0px;width:160px;text-align:center;top:1143.0px;height:46px;line-height:46px;font-size:28px;color:#606266;font-weight:normal;">10190</div>
<div class="a" style="left:1148.0px;width:160px;text-align:center;top:1143.0px;height:46px;line-height:46px;font-size:28px;color:#606266;font-weight:normal;">1000000</div>
<div class="a" style="left:1308.0px;width:160px;text-align:center;top:1143.0px;height:46px;line-height:46px;font-size:28px;color:#606266;font-weight:normal;">0</div>
<div class="a" style="left:1468.0px;width:160px;text-align:center;top:1143.0px;height:46px;line-height:46px;font-size:28px;color:#606266;font-weight:normal;">0</div>
<div class="a" style="left:1628.0px;width:160px;text-align:center;top:1143.0px;height:46px;line-height:46px;font-size:28px;color:#606266;font-weight:normal;">0</div>
<div class="a" style="left:1788.0px;width:160px;text-align:center;top:1143.0px;height:46px;line-height:46px;font-size:28px;color:#606266;font-weight:normal;">0/0</div>
<div class="tag tb" style="left:1982px;top:1138px;width:92px">正常</div>
<div class="tag tr" style="left:2130px;top:1138px;width:116px">未认证</div>
<div class="tag tg" style="left:2302px;top:1138px;width:92px">正常</div>
<svg class="a" style="left:2457px;top:1130px" width="22" height="24" viewBox="0 0 22 24"><g fill="none" stroke="#4290e2" stroke-width="1.7" stroke-linejoin="round"><path d="M9.3 1.4 L15.6 5.2 L7.2 19.4 L1.9 21.5 L1.1 16.1 Z M8 6 L13.3 8.7 M1.1 16.1 L7.2 19.4"/><path d="M9.5 21.7 H19.7" stroke-width="1.5"/></g></svg>
<svg class="a" style="left:2604px;top:1130px" width="22" height="24" viewBox="0 0 22 24"><g fill="none" stroke="#4290e2" stroke-width="1.7" stroke-linejoin="round"><path d="M9.3 1.4 L15.6 5.2 L7.2 19.4 L1.9 21.5 L1.1 16.1 Z M8 6 L13.3 8.7 M1.1 16.1 L7.2 19.4"/><path d="M9.5 21.7 H19.7" stroke-width="1.5"/></g></svg>
<div class="a" style="left:2481px;top:1123.0px;height:38px;line-height:38px;font-size:24px;color:#4290e2;font-weight:normal;">修改密码</div>
<div class="a" style="left:2627px;top:1123.0px;height:38px;line-height:38px;font-size:24px;color:#4290e2;font-weight:normal;">修改上级</div>
<svg class="a" style="left:2732px;top:1135px" width="15" height="15" viewBox="0 0 15 15"><path d="M1 1 L14 14 M14 1 L1 14" stroke="#4290e2" stroke-width="1.8"/></svg>
<div class="a" style="left:2752px;top:1123.0px;height:38px;line-height:38px;font-size:24px;color:#4290e2;font-weight:normal;">冻结</div>
<div class="a" style="left:2488px;top:1177.0px;height:38px;line-height:38px;font-size:24px;color:#606266;font-weight:normal;">输赢</div>
<svg class="a" style="left:2550px;top:1190.8px" width="17" height="8.5" viewBox="0 0 17 8.5"><path d="M0 0 L8.5 8.5 L17 0" fill="none" stroke="#606266" stroke-width="1.6"/></svg>
<div class="a" style="left:2580px;top:1177.0px;height:38px;line-height:38px;font-size:24px;color:#606266;font-weight:normal;">冲扣</div>
<svg class="a" style="left:2642px;top:1190.8px" width="17" height="8.5" viewBox="0 0 17 8.5"><path d="M0 0 L8.5 8.5 L17 0" fill="none" stroke="#606266" stroke-width="1.6"/></svg>
<div class="a" style="left:2672px;top:1177.0px;height:38px;line-height:38px;font-size:24px;color:#606266;font-weight:normal;">业务员</div>
<svg class="a" style="left:2758px;top:1190.8px" width="17" height="8.5" viewBox="0 0 17 8.5"><path d="M0 0 L8.5 8.5 L17 0" fill="none" stroke="#606266" stroke-width="1.6"/></svg>
<div class="cb" style="left:440px;top:1299px"></div>
<div class="a" style="left:508.0px;width:160px;text-align:center;top:1289.0px;height:46px;line-height:46px;font-size:28px;color:#606266;font-weight:normal;">Green</div>
<div class="a" style="left:668.0px;width:160px;text-align:center;top:1266.0px;height:46px;line-height:46px;font-size:28px;color:#606266;font-weight:normal;">1675256</div>
<div class="a" style="left:668.0px;width:160px;text-align:center;top:1312.0px;height:46px;line-height:46px;font-size:28px;color:#606266;font-weight:normal;">62</div>
<div class="a" style="left:828.0px;width:160px;text-align:center;top:1289.0px;height:46px;line-height:46px;font-size:28px;color:#606266;font-weight:normal;">Green</div>
<div class="a" style="left:988.0px;width:160px;text-align:center;top:1289.0px;height:46px;line-height:46px;font-size:28px;color:#606266;font-weight:normal;">10189</div>
<div class="a" style="left:1148.0px;width:160px;text-align:center;top:1289.0px;height:46px;line-height:46px;font-size:28px;color:#606266;font-weight:normal;">0</div>
<div class="a" style="left:1308.0px;width:160px;text-align:center;top:1289.0px;height:46px;line-height:46px;font-size:28px;color:#606266;font-weight:normal;">0</div>
<div class="a" style="left:1468.0px;width:160px;text-align:center;top:1289.0px;height:46px;line-height:46px;font-size:28px;color:#606266;font-weight:normal;">0</div>
<div class="a" style="left:1628.0px;width:160px;text-align:center;top:1289.0px;height:46px;line-height:46px;font-size:28px;color:#606266;font-weight:normal;">0</div>
<div class="a" style="left:1788.0px;width:160px;text-align:center;top:1289.0px;height:46px;line-height:46px;font-size:28px;color:#606266;font-weight:normal;">0/0</div>
<div class="tag tb" style="left:1982px;top:1284px;width:92px">正常</div>
<div class="tag tg" style="left:2130px;top:1284px;width:116px">已认证</div>
<div class="tag tg" style="left:2302px;top:1284px;width:92px">正常</div>
<svg class="a" style="left:2457px;top:1276px" width="22" height="24" viewBox="0 0 22 24"><g fill="none" stroke="#4290e2" stroke-width="1.7" stroke-linejoin="round"><path d="M9.3 1.4 L15.6 5.2 L7.2 19.4 L1.9 21.5 L1.1 16.1 Z M8 6 L13.3 8.7 M1.1 16.1 L7.2 19.4"/><path d="M9.5 21.7 H19.7" stroke-width="1.5"/></g></svg>
<svg class="a" style="left:2604px;top:1276px" width="22" height="24" viewBox="0 0 22 24"><g fill="none" stroke="#4290e2" stroke-width="1.7" stroke-linejoin="round"><path d="M9.3 1.4 L15.6 5.2 L7.2 19.4 L1.9 21.5 L1.1 16.1 Z M8 6 L13.3 8.7 M1.1 16.1 L7.2 19.4"/><path d="M9.5 21.7 H19.7" stroke-width="1.5"/></g></svg>
<div class="a" style="left:2481px;top:1269.0px;height:38px;line-height:38px;font-size:24px;color:#4290e2;font-weight:normal;">修改密码</div>
<div class="a" style="left:2627px;top:1269.0px;height:38px;line-height:38px;font-size:24px;color:#4290e2;font-weight:normal;">修改上级</div>
<svg class="a" style="left:2732px;top:1281px" width="15" height="15" viewBox="0 0 15 15"><path d="M1 1 L14 14 M14 1 L1 14" stroke="#4290e2" stroke-width="1.8"/></svg>
<div class="a" style="left:2752px;top:1269.0px;height:38px;line-height:38px;font-size:24px;color:#4290e2;font-weight:normal;">冻结</div>
<div class="a" style="left:2488px;top:1323.0px;height:38px;line-height:38px;font-size:24px;color:#606266;font-weight:normal;">输赢</div>
<svg class="a" style="left:2550px;top:1336.8px" width="17" height="8.5" viewBox="0 0 17 8.5"><path d="M0 0 L8.5 8.5 L17 0" fill="none" stroke="#606266" stroke-width="1.6"/></svg>
<div class="a" style="left:2580px;top:1323.0px;height:38px;line-height:38px;font-size:24px;color:#606266;font-weight:normal;">冲扣</div>
<svg class="a" style="left:2642px;top:1336.8px" width="17" height="8.5" viewBox="0 0 17 8.5"><path d="M0 0 L8.5 8.5 L17 0" fill="none" stroke="#606266" stroke-width="1.6"/></svg>
<div class="a" style="left:2672px;top:1323.0px;height:38px;line-height:38px;font-size:24px;color:#606266;font-weight:normal;">业务员</div>
<svg class="a" style="left:2758px;top:1336.8px" width="17" height="8.5" viewBox="0 0 17 8.5"><path d="M0 0 L8.5 8.5 L17 0" fill="none" stroke="#606266" stroke-width="1.6"/></svg>
<div class="cb" style="left:440px;top:1445px"></div>
<div class="a" style="left:508.0px;width:160px;text-align:center;top:1435.0px;height:46px;line-height:46px;font-size:28px;color:#606266;font-weight:normal;">Tang</div>
<div class="a" style="left:668.0px;width:160px;text-align:center;top:1412.0px;height:46px;line-height:46px;font-size:28px;color:#606266;font-weight:normal;">5939511</div>
<div class="a" style="left:668.0px;width:160px;text-align:center;top:1458.0px;height:46px;line-height:46px;font-size:28px;color:#606266;font-weight:normal;">5</div>
<div class="a" style="left:828.0px;width:160px;text-align:center;top:1435.0px;height:46px;line-height:46px;font-size:28px;color:#606266;font-weight:normal;">Tang</div>
<div class="a" style="left:988.0px;width:160px;text-align:center;top:1435.0px;height:46px;line-height:46px;font-size:28px;color:#606266;font-weight:normal;">10188</div>
<div class="a" style="left:1148.0px;width:160px;text-align:center;top:1435.0px;height:46px;line-height:46px;font-size:28px;color:#606266;font-weight:normal;">8.69</div>
<div class="a" style="left:1308.0px;width:160px;text-align:center;top:1435.0px;height:46px;line-height:46px;font-size:28px;color:#606266;font-weight:normal;">0</div>
<div class="a" style="left:1468.0px;width:160px;text-align:center;top:1435.0px;height:46px;line-height:46px;font-size:28px;color:#606266;font-weight:normal;">0</div>
<div class="a" style="left:1628.0px;width:160px;text-align:center;top:1435.0px;height:46px;line-height:46px;font-size:28px;color:#606266;font-weight:normal;">-396</div>
<div class="a" style="left:1788.0px;width:160px;text-align:center;top:1435.0px;height:46px;line-height:46px;font-size:28px;color:#606266;font-weight:normal;">0/0</div>
<div class="tag tb" style="left:1982px;top:1430px;width:92px">正常</div>
<div class="tag tg" style="left:2130px;top:1430px;width:116px">已认证</div>
<div class="tag tg" style="left:2302px;top:1430px;width:92px">正常</div>
<svg class="a" style="left:2457px;top:1422px" width="22" height="24" viewBox="0 0 22 24"><g fill="none" stroke="#4290e2" stroke-width="1.7" stroke-linejoin="round"><path d="M9.3 1.4 L15.6 5.2 L7.2 19.4 L1.9 21.5 L1.1 16.1 Z M8 6 L13.3 8.7 M1.1 16.1 L7.2 19.4"/><path d="M9.5 21.7 H19.7" stroke-width="1.5"/></g></svg>
<svg class="a" style="left:2604px;top:1422px" width="22" height="24" viewBox="0 0 22 24"><g fill="none" stroke="#4290e2" stroke-width="1.7" stroke-linejoin="round"><path d="M9.3 1.4 L15.6 5.2 L7.2 19.4 L1.9 21.5 L1.1 16.1 Z M8 6 L13.3 8.7 M1.1 16.1 L7.2 19.4"/><path d="M9.5 21.7 H19.7" stroke-width="1.5"/></g></svg>
<div class="a" style="left:2481px;top:1415.0px;height:38px;line-height:38px;font-size:24px;color:#4290e2;font-weight:normal;">修改密码</div>
<div class="a" style="left:2627px;top:1415.0px;height:38px;line-height:38px;font-size:24px;color:#4290e2;font-weight:normal;">修改上级</div>
<svg class="a" style="left:2732px;top:1427px" width="15" height="15" viewBox="0 0 15 15"><path d="M1 1 L14 14 M14 1 L1 14" stroke="#4290e2" stroke-width="1.8"/></svg>
<div class="a" style="left:2752px;top:1415.0px;height:38px;line-height:38px;font-size:24px;color:#4290e2;font-weight:normal;">冻结</div>
<div class="a" style="left:2488px;top:1469.0px;height:38px;line-height:38px;font-size:24px;color:#606266;font-weight:normal;">输赢</div>
<svg class="a" style="left:2550px;top:1482.8px" width="17" height="8.5" viewBox="0 0 17 8.5"><path d="M0 0 L8.5 8.5 L17 0" fill="none" stroke="#606266" stroke-width="1.6"/></svg>
<div class="a" style="left:2580px;top:1469.0px;height:38px;line-height:38px;font-size:24px;color:#606266;font-weight:normal;">冲扣</div>
<svg class="a" style="left:2642px;top:1482.8px" width="17" height="8.5" viewBox="0 0 17 8.5"><path d="M0 0 L8.5 8.5 L17 0" fill="none" stroke="#606266" stroke-width="1.6"/></svg>
<div class="a" style="left:2672px;top:1469.0px;height:38px;line-height:38px;font-size:24px;color:#606266;font-weight:normal;">业务员</div>
<svg class="a" style="left:2758px;top:1482.8px" width="17" height="8.5" viewBox="0 0 17 8.5"><path d="M0 0 L8.5 8.5 L17 0" fill="none" stroke="#606266" stroke-width="1.6"/></svg>
<div class="a" style="left:2536px;top:660px;width:125px;height:144px;background:#fff;border:1px solid #ebeef5;border-radius:8px;box-shadow:0 4px 24px 0 rgba(0,0,0,.10)"></div>
<svg class="a" style="left:2604px;top:647px" width="22" height="14" viewBox="0 0 22 14"><path d="M0 14 L11 1 L22 14Z" fill="#fff" stroke="#ebeef5" stroke-width="1"/><path d="M0.5 14.5 H21.5" stroke="#fff" stroke-width="2"/></svg>
<div class="a" style="left:2571px;top:680.5px;height:43px;line-height:43px;font-size:27px;color:#606266;font-weight:normal;">充值</div>
<div class="a" style="left:2571px;top:740.5px;height:43px;line-height:43px;font-size:27px;color:#606266;font-weight:normal;">扣款</div>
<div class="wm" style="left:6px;top:29.0px">6FYM.NET</div>
<div class="wm" style="left:6px;top:539.0px">6FYM.NET</div>
<div class="wm" style="left:6px;top:1049.0px">6FYM.NET</div>
<div class="wm" style="left:960px;top:29.0px">6FYM.NET</div>
<div class="wm" style="left:960px;top:539.0px">6FYM.NET</div>
<div class="wm" style="left:960px;top:1049.0px">6FYM.NET</div>
<div class="wm" style="left:1914px;top:29.0px">6FYM.NET</div>
<div class="wm" style="left:1914px;top:539.0px">6FYM.NET</div>
<div class="wm" style="left:1914px;top:1049.0px">6FYM.NET</div>
</body></html>
